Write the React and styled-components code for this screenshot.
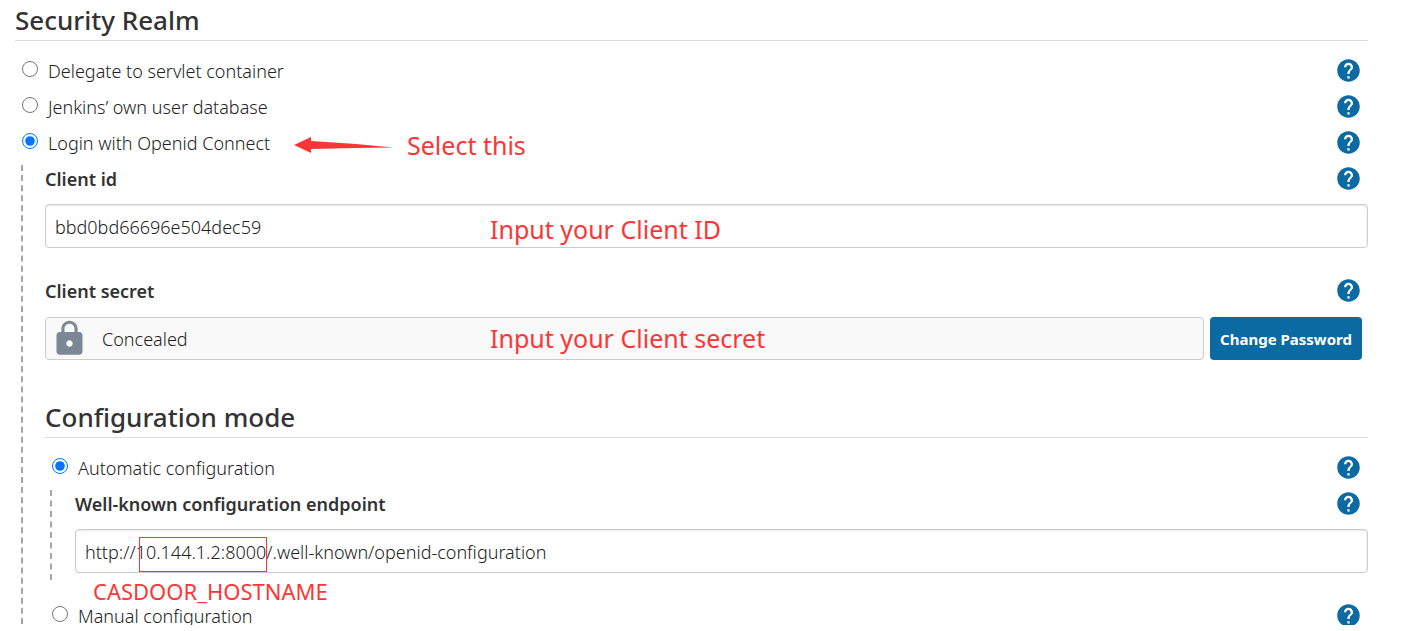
import React from 'react';
import styled, { createGlobalStyle } from 'styled-components';
import { MdHelp, MdLock } from 'react-icons/md';

const GlobalStyle = createGlobalStyle`
  *, *::before, *::after { box-sizing: border-box; }
  body {
    margin: 0;
    background: #fff;
    color: #333;
    font-family: 'Noto Sans', 'Open Sans', sans-serif;
    font-size: 18px;
    font-weight: 300;
  }
`;

const Page = styled.main`
  padding: 0 42px 0 15px;
  overflow: hidden;
`;

const Heading = styled.h2`
  margin: ${(p) => (p.$spaced ? '37px 0 12px' : '0 0 12px')};
  height: 41px;
  border-bottom: 1px solid #dcdcdc;
  font-size: 26px;
  font-weight: 500;
  line-height: 41px;
`;

const Row = styled.div`
  position: relative;
  display: flex;
  align-items: center;
  justify-content: space-between;
  height: 36px;
  padding-right: 6px;
`;

const Choice = styled.label`
  display: flex;
  align-items: center;
  gap: 10px;
  padding-left: 7px;
  color: #222;
  line-height: 36px;
`;

const Radio = styled.input`
  width: 16px;
  height: 16px;
  margin: 0 0 4px;
  accent-color: #0075ff;
`;

const FieldLabel = styled.label`
  font-weight: 600;
  line-height: 36px;
`;

const HelpButton = styled.button`
  display: flex;
  margin: 0 0 1px;
  padding: 0;
  border: 0;
  background: none;
  color: #0b6aa2;
  cursor: pointer;
`;

const Nested = styled.div`
  display: flow-root;
  margin: ${(p) => (p.$last ? '4px 0 -9px 6px' : '4px 0 18px 5px')};
  padding: ${(p) => (p.$last ? '0 0 0 22px' : '0 0 7px 23px')};
  border-left: 2px dashed #a6a6a6;

  & > :first-child {
    margin-top: -4px;
  }
`;

const Field = styled.div`
  position: relative;
  display: flex;
  gap: 6px;
  margin-top: ${(p) => (p.$secret ? 8 : 7)}px;
`;

const TextInput = styled.input`
  flex: 1;
  min-width: 0;
  height: 44px;
  padding: 1px 9px 0;
  border: 1px solid #ccc;
  border-radius: 4px;
  box-shadow: inset 0 1px 2px rgba(0, 0, 0, 0.1);
  background: #fff;
  color: #222;
  font: inherit;
`;

const Concealed = styled.div`
  display: flex;
  flex: 1;
  align-items: center;
  gap: 13px;
  height: 43px;
  padding-left: 4px;
  border: 1px solid #ccc;
  border-radius: 4px;
  background: #f9f9f9;
  color: #222;
  line-height: 40px;

  svg {
    color: #7b8794;
  }
`;

const PasswordButton = styled.button`
  height: 43px;
  margin-right: 6px;
  width: 152px;
  padding: 0;
  border: 0;
  border-radius: 4px;
  background: #0b6aa2;
  color: #fff;
  font-family: inherit;
  font-size: 15px;
  font-weight: 700;
  white-space: nowrap;
  cursor: pointer;
`;

const FieldGroup = styled.div`
  margin-bottom: ${(p) => (p.$gap ? '25px' : '0')};
`;

const Note = styled.span`
  position: absolute;
  top: ${(p) => p.$top}px;
  left: ${(p) => p.$left}px;
  color: #fc3636;
  font-size: ${(p) => p.$size || 25}px;
  font-weight: 400;
  line-height: 32px;
  white-space: nowrap;
  pointer-events: none;
`;

const Arrow = styled.svg`
  position: absolute;
  top: 10px;
  left: 279px;
`;

const HostBox = styled.span`
  position: absolute;
  top: 8px;
  left: 64px;
  width: 128px;
  height: 35px;
  border: 1px solid #fc3636;
  pointer-events: none;
`;

const Help = ({ topic }) => (
  <HelpButton type="button" aria-label={`Help for ${topic}`}>
    <MdHelp size={27} />
  </HelpButton>
);

const RadioRow = ({ name, label, checked, children }) => (
  <Row>
    <Choice>
      <Radio type="radio" name={name} defaultChecked={checked} />
      {label}
    </Choice>
    {children}
    <Help topic={label} />
  </Row>
);

const LabelRow = ({ id, label }) => (
  <Row>
    <FieldLabel htmlFor={id}>{label}</FieldLabel>
    <Help topic={label} />
  </Row>
);

export default function App() {
  return (
    <>
      <GlobalStyle />
      <Page>
        <Heading>Security Realm</Heading>
        <RadioRow name="realm" label="Delegate to servlet container" />
        <RadioRow name="realm" label="Jenkins’ own user database" />
        <RadioRow name="realm" label="Login with Openid Connect" checked>
          <Arrow width="100" height="20" viewBox="0 0 100 20" aria-hidden="true">
            <path d="M0 10 17 2v4l45 3 37 3.500-37 .5-45 1v4Z" fill="#fc3636" />
          </Arrow>
          <Note $top={4} $left={392}>Select this</Note>
        </RadioRow>
        <Nested $last>
          <FieldGroup $gap>
            <LabelRow id="client-id" label="Client id" />
            <Field>
              <TextInput id="client-id" type="text" defaultValue="bbd0bd66696e504dec59" />
              <Note $top={9} $left={445}>Input your Client ID</Note>
            </Field>
          </FieldGroup>
          <FieldGroup>
            <LabelRow id="change-secret" label="Client secret" />
            <Field $secret>
              <Concealed>
                <MdLock size={39} />
                Concealed
              </Concealed>
              <PasswordButton id="change-secret" type="button">Change Password</PasswordButton>
              <Note $top={5} $left={445}>Input your Client secret</Note>
            </Field>
          </FieldGroup>
          <Heading as="h3" $spaced>Configuration mode</Heading>
          <RadioRow name="mode" label="Automatic configuration" checked />
          <Nested>
            <LabelRow id="endpoint" label="Well-known configuration endpoint" />
            <Field>
              <TextInput
                id="endpoint"
                type="text"
                defaultValue="http://10.144.1.2:8000/.well-known/openid-configuration"
              />
              <HostBox />
              <Note $top={46} $left={18} $size={22}>CASDOOR_HOSTNAME</Note>
            </Field>
          </Nested>
          <RadioRow name="mode" label="Manual configuration" />
        </Nested>
      </Page>
    </>
  );
}
